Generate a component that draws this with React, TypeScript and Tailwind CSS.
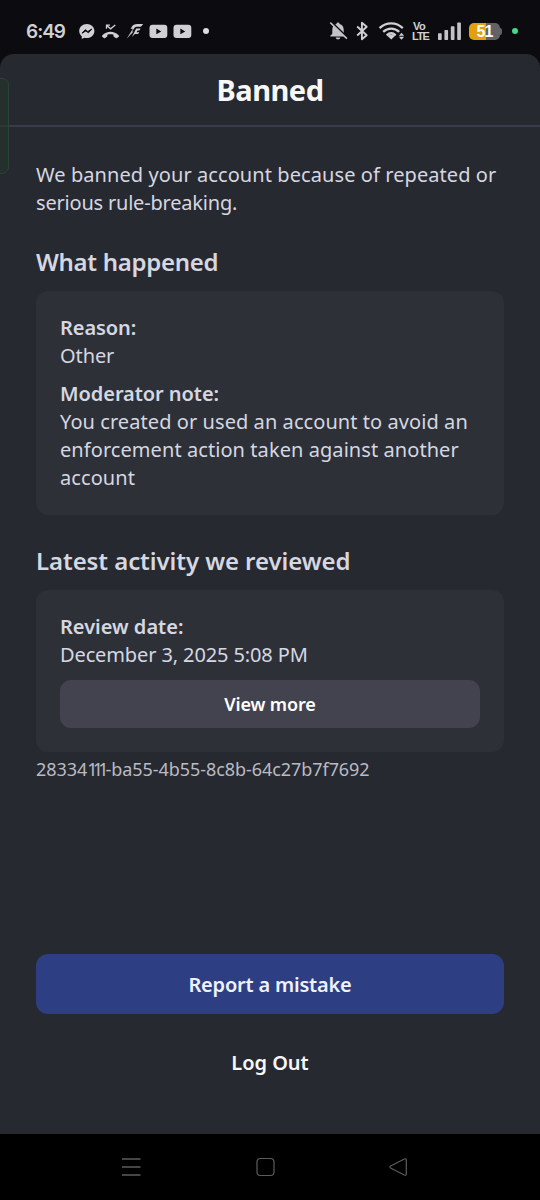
function StatusBar() {
  return (
    <div className="flex h-[54px] items-start bg-[#0b0b10] pt-[20px] text-[#d0d0d3]">
      <div className="ml-[26px] w-[53px] pt-px font-['Inter',sans-serif] text-[19px] leading-[22px] font-semibold tracking-[-1px]">6:49</div>
      <svg className="h-[22px] w-[16px]" viewBox="79 20 16 22" fill="none">
        <path d="M86.8 24c-4.3 0-7.6 3.1-7.6 7 0 2.2 1 4 2.6 5.3v2.8l2.5-1.4c.8.2 1.6.4 2.5.4 4.3 0 7.6-3.1 7.6-7.1s-3.3-7-7.6-7Z" fill="#d0d0d3" />
        <path d="m82 33.2 3.3-3.5 2.5 1.9 4-2.6-3.4 3.8-2.5-1.9Z" fill="#0b0b10" stroke="#0b0b10" strokeWidth="1" strokeLinejoin="round" />
      </svg>
      <svg className="ml-[6px] h-[22px] w-[20px]" viewBox="101 20 20 22" fill="none">
        <path d="M102.2 35.6c4.6-5 12-5 16.6 0 .3.4.3.8 0 1.100l-1.800 1.300c-.4.300-.8.300-1.200 0l-2.300-1.500v-1.800c-2-.5-4.200-.5-6.200 0v1.800l-2.200 1.500c-.4.300-.8.300-1.200 0l-1.700-1.300c-.3-.3-.3-.7 0-1.100Z" fill="#d0d0d3" />
        <path d="M106.500 28.700v-3.500h3.500M106.700 25.400l3.900 3.400 4.700-3.900" stroke="#d0d0d3" strokeWidth="1.300" />
      </svg>
      <svg className="ml-[4px] h-[22px] w-[20px]" viewBox="125 20 20 22" fill="#d0d0d3">
        <path d="M143.200 24h-5.700c-3 0-4.800 1-6 3.200l-.9 1.600h2.300l-6.200 9.900 6.800-7.200h-1.600l2.400-3.200c.8-1.100 1.600-1.500 3.100-1.500h3.500Z" />
        <path d="M140.600 28.400h-4.400l-4.300 8.600 3-3h3.200l1.300-1.800h-2.800l.9-1.600h1.900Z" />
      </svg>
      <svg className="ml-[4px] h-[22px] w-[19px]" viewBox="149 20 19 22">
        <rect x="149.500" y="24.800" width="17.800" height="13.200" rx="3" fill="#d0d0d3" />
        <path d="m156.300 28.600 5 2.800-5 2.800Z" fill="#0b0b10" />
      </svg>
      <svg className="ml-[5px] h-[22px] w-[19px]" viewBox="149 20 19 22">
        <rect x="149.500" y="24.800" width="17.800" height="13.200" rx="3" fill="#d0d0d3" />
        <path d="m156.300 28.600 5 2.800-5 2.800Z" fill="#0b0b10" />
      </svg>
      <span className="mt-[8px] ml-[11px] size-[6px] rounded-full bg-[#dcdcde]" />
      <svg className="ml-[120px] h-[22px] w-[19px]" viewBox="329 20 19 22" fill="none">
        <path d="M338 22.600c.9 0 1.500.6 1.500 1.400 2.800.7 4.200 2.900 4.200 5.700v4l2 2v.9h-15.400v-.9l2-1.900v-4.100c0-2.800 1.400-5 4.200-5.700 0-.8.600-1.400 1.500-1.400ZM335.700 37.400h4.600c-.2 1.200-1.100 2-2.300 2s-2.100-.8-2.300-2Z" fill="#c4c4c7" />
        <path d="m331.300 22 17 16.500" stroke="#0b0b10" strokeWidth="2" />
        <path d="m330.300 22.600 16.600 16" stroke="#c4c4c7" strokeWidth="1.500" />
      </svg>
      <svg className="ml-[8px] h-[22px] w-[14px]" viewBox="356 20 14 22" fill="none">
        <path d="m357.200 26.500 9.500 8.700-4.800 4V22.800l4.800 4-9.500 8.700" stroke="#d0d0d3" strokeWidth="1.900" strokeLinejoin="round" />
      </svg>
      <svg className="ml-[9px] h-[22px] w-[26px]" viewBox="379 20 26 22" fill="none" stroke="#d0d0d3" strokeWidth="2.300">
        <path d="M379.600 28.100c6.600-6.400 16.600-6.400 23.200 0M383.200 31.900c4.600-4.300 11.400-4.300 16 0M386.700 35.300c2.700-2.400 6.300-2.400 9 0" />
        <path d="M387.500 36.100c2-1.700 5.400-1.700 7.400 0l-3.700 3.500Z" fill="#d0d0d3" stroke="none" />
        <path d="m401.500 32.700 2.600 3h-5.200ZM401.500 39.700l2.600-3h-5.200Z" fill="#d0d0d3" stroke="none" />
      </svg>
      <div className="ml-[7px] flex w-[18px] flex-col items-start font-['Liberation_Sans',sans-serif] text-[11px] leading-[10px] font-bold tracking-[-0.5px] whitespace-nowrap">
        <span className="pt-[1px] pl-px">Vo</span>
        <span className="tracking-[-1px]">LTE</span>
      </div>
      <svg className="ml-[8px] h-[22px] w-[24px]" viewBox="438 20 24 22" fill="#c4c4c7">
        <rect x="438" y="33.200" width="3.700" height="6.800" rx=".7" />
        <rect x="444.400" y="30" width="3.700" height="10" rx=".7" />
        <rect x="450.800" y="26.300" width="3.700" height="13.700" rx=".7" />
        <rect x="457.200" y="22.400" width="3.700" height="17.600" rx=".7" />
      </svg>
      <div className="mt-[3px] ml-[7px] flex h-[17px] w-[31px] items-center justify-center rounded-[5px] bg-[linear-gradient(90deg,#e2a00f_55%,#626265_55%)] font-['Liberation_Sans',sans-serif] text-[16px] leading-[17px] font-bold tracking-[-0.8px] text-white">51</div>
      <span className="mt-[8px] h-[7px] w-[2px] rounded-r-full bg-[#626265]" />
      <span className="mt-[8px] ml-[10px] size-[6px] rounded-full bg-[#45d885]" />
    </div>
  );
}

export default function App() {
  return (
    <div className="flex h-[1200px] w-[540px] flex-col overflow-hidden bg-[#0b0b10] font-['Noto_Sans',sans-serif] text-[#d5d7e1]">
      <StatusBar />
      <main className="relative flex h-[1080px] flex-col rounded-t-[14px] bg-[#272930]">
        <div className="absolute top-[24px] left-[-10px] h-[96px] w-[19px] rounded-[7px] border border-[#294634] bg-[#24332a]/60" />
        <header className="flex h-[73px] items-center justify-center border-b-2 border-[#3a3c4b] text-[29px] leading-[36px] font-bold tracking-[-0.5px] text-[#f7f7f8]">
          <h1>Banned</h1>
        </header>
        <div className="px-[36px] pt-[34px]">
          <p className="text-[20px] leading-[28px] whitespace-nowrap">
            <span className="tracking-[0.08px]">We banned your account because of repeated or</span><br />
            <span className="tracking-[-0.2px]">serious rule-breaking.</span>
          </p>
          <h2 className="mt-[27px] text-[24px] leading-[36px] font-semibold tracking-[-0.3px]">What happened</h2>
          <section className="mt-[11px] h-[224px] rounded-[12px] bg-[#2e3038] px-[24px] pt-[23px] text-[20px] leading-[28px]">
            <h3 className="font-semibold tracking-[-0.08px]">Reason:</h3>
            <p className="tracking-[-0.1px]">Other</p>
            <h3 className="mt-[10px] font-semibold tracking-[-0.06px]">Moderator note:</h3>
            <p className="tracking-[0.07px] whitespace-nowrap">
              You created or used an account to avoid an<br />
              enforcement action taken against another<br />
              account
            </p>
          </section>
          <h2 className="mt-[28px] text-[24px] leading-[36px] font-semibold tracking-[-0.08px]">Latest activity we reviewed</h2>
          <section className="mt-[11px] h-[162px] rounded-[12px] bg-[#2e3038] px-[24px] pt-[23px] text-[20px] leading-[28px]">
            <h3 className="font-semibold">Review date:</h3>
            <p className="tracking-[-0.12px]">December 3, 2025 5:08 PM</p>
            <button className="mt-[11px] block h-[48px] w-full rounded-[11px] bg-[#42434e] text-[18px] font-semibold tracking-[-0.15px] text-white">View more</button>
          </section>
          <p className="mt-[5px] text-[18px] leading-[24px] tracking-[-0.06px] text-[#b9bbc4]">28334<span className="tracking-[-4.8px]">11</span><span className="tracking-[-3px]">1</span>-ba55-4b55-8c8b-64c27b7f7692</p>
        </div>
        <div className="mt-auto flex flex-col px-[36px] pb-[42px]">
          <button className="h-[60px] rounded-[12px] bg-[#2d3f82] pt-[2px] text-[20px] font-semibold tracking-[-0.2px] text-[#eef2ff]">Report a mistake</button>
          <button className="mt-[18px] h-[60px] pt-[2px] text-[20px] font-semibold tracking-[-0.05px] text-[#f7f7f8]">Log Out</button>
        </div>
      </main>
      <nav className="flex h-[66px] items-start bg-black pt-[23px] pl-[121px]">
        <svg className="size-[20px]" viewBox="0 0 20 20" stroke="#5c5c5c" strokeWidth="1.5"><path d="M1 2h18.500M1 10h18.500M1 18h18.500" /></svg>
        <svg className="ml-[114px] size-[20px]" viewBox="0 0 20 20" fill="none" stroke="#5c5c5c" strokeWidth="1.2"><rect x="2" y="1.500" width="17" height="17" rx="3.500" /></svg>
        <svg className="ml-[113px] size-[20px]" viewBox="0 0 20 20" fill="none" stroke="#5c5c5c" strokeWidth="1.2"><path d="M2.600 9 16.300 2q2-.8 2 1v14q0 1.800-2 1L2.600 11q-1.500-1 0-2Z" /></svg>
      </nav>
    </div>
  );
}
